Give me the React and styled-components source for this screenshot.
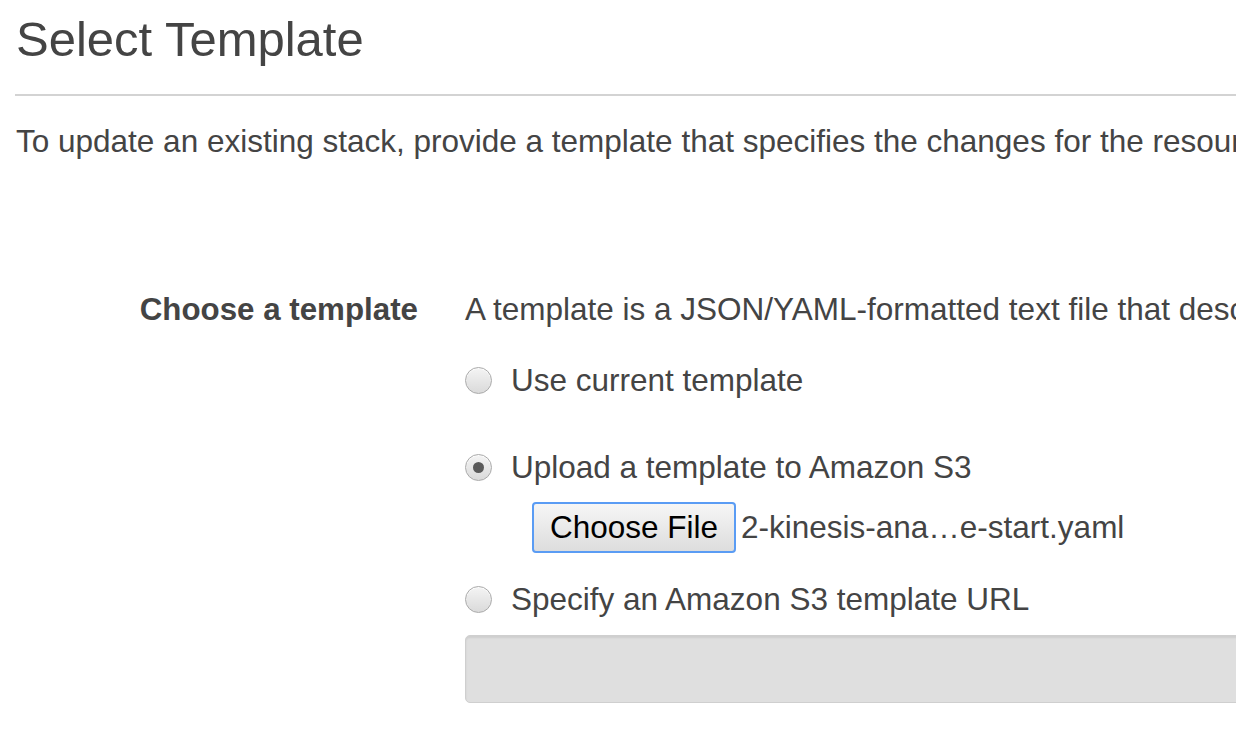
import React from 'react';
import styled, {createGlobalStyle} from 'styled-components';

const GlobalStyle = createGlobalStyle`
  html, body {
    margin: 0;
    padding: 0;
    background: #fff;
  }
  body {
    font-family: 'Liberation Sans', Arial, sans-serif;
    color: #444;
  }
`;

const App = () => {
  return (
    <>
      <GlobalStyle />
      <Page>
        <Title>Select Template</Title>
        <Intro>
          To update an existing stack, provide a template that specifies the changes for the resources you want to update.
        </Intro>

        <FormRow>
          <Label>Choose a template</Label>
          <Field>
            <Help>
              A template is a JSON/YAML-formatted text file that describes your stack's resources and their properties.
            </Help>

            <Option gap={30}>
              <Radio />
              <OptionText>Use current template</OptionText>
            </Option>

            <Option gap={46}>
              <Radio checked />
              <OptionText>Upload a template to Amazon S3</OptionText>
            </Option>
            <FileRow>
              <FileButton>Choose File</FileButton>
              <FileName>2-kinesis-ana…e-start.yaml</FileName>
            </FileRow>

            <Option gap={26}>
              <Radio />
              <OptionText>Specify an Amazon S3 template URL</OptionText>
            </Option>
            <UrlInput />
          </Field>
        </FormRow>
      </Page>
    </>
  );
};

const Page = styled.div`
  width: 1236px;
  height: 729px;
  overflow: hidden;
  padding-left: 15px;
  box-sizing: border-box;
  white-space: nowrap;
`;

const Title = styled.h1`
  margin: 0;
  padding: 10px 0 26px 1px;
  font-size: 49px;
  line-height: 58px;
  font-weight: 400;
  color: #444;
  border-bottom: 2px solid #d3d3d3;
  width: 1400px;
`;

const Intro = styled.div`
  margin-top: 25px;
  padding-left: 1px;
  font-size: 31.5px;
  line-height: 41px;
`;

const FormRow = styled.div`
  display: flex;
  margin-top: 127px;
`;

const Label = styled.div`
  flex: none;
  width: 403px;
  text-align: right;
  font-size: 31.3px;
  line-height: 41px;
  font-weight: 700;
  color: #444;
  margin-right: 47px;
`;

const Field = styled.div`
  display: flex;
  flex-direction: column;
`;

const Help = styled.div`
  font-size: 31.5px;
  line-height: 41px;
`;

const Option = styled.label`
  display: flex;
  align-items: center;
  gap: 19px;
  margin-top: ${p => p.gap}px;
  height: 41px;
`;

const Radio = styled.span`
  position: relative;
  width: 27px;
  height: 27px;
  box-sizing: border-box;
  border-radius: 50%;
  border: 1px solid #aaa;
  background: linear-gradient(#f4f4f4, #dadada);
  box-shadow: inset 0 1px 1px rgba(255, 255, 255, 0.8);
  flex: none;

  &::after {
    content: '';
    display: ${p => (p.checked ? 'block' : 'none')};
    position: absolute;
    left: 7px;
    top: 7px;
    width: 11px;
    height: 11px;
    border-radius: 50%;
    background: #5a5a5a;
  }
`;

const OptionText = styled.span`
  font-size: 31.5px;
  line-height: 41px;
`;

const FileRow = styled.div`
  display: flex;
  align-items: center;
  margin-top: 14px;
  padding-left: 67px;
`;

const FileButton = styled.button`
  flex: none;
  width: 204px;
  height: 51px;
  box-sizing: border-box;
  border: 2px solid #5a9cf4;
  border-radius: 4px;
  background: linear-gradient(#f6f6f6, #dddddd);
  font-family: 'Liberation Sans', Arial, sans-serif;
  font-size: 31.5px;
  color: #000;
  padding: 0;
`;

const FileName = styled.span`
  margin-left: 5px;
  font-size: 31.5px;
  color: #444;
`;

const UrlInput = styled.div`
  margin-top: 15px;
  width: 900px;
  height: 68px;
  box-sizing: border-box;
  border: 1px solid #cfcfcf;
  border-radius: 5px;
  background: #dfdfdf;
  box-shadow: inset 0 2px 2px rgba(0, 0, 0, 0.08);
`;

export default App;
